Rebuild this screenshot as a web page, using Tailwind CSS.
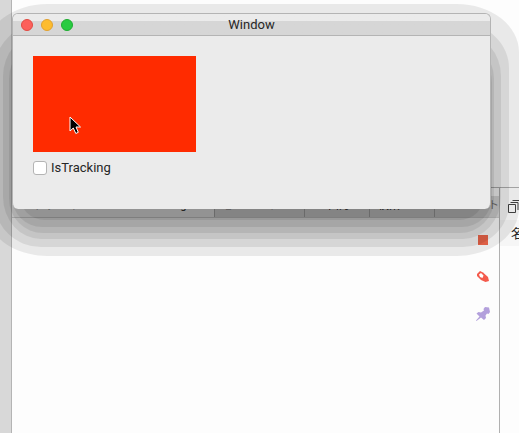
<!DOCTYPE html>
<html lang="en">
<head>
<meta charset="utf-8">
<title>Window</title>
<script src="https://cdn.jsdelivr.net/npm/@tailwindcss/browser@4"></script>
</head>
<body class="relative min-h-screen overflow-hidden bg-[#fdfdfd] font-[Roboto,'Noto_Sans_CJK_JP',sans-serif] text-[#262626]">

<!-- Editor behind the window -->
<div class="flex h-screen">
  <aside class="w-3 shrink-0 border-r border-[#b4b4b4] bg-[#d8d8d8]"></aside>
  <div class="flex min-w-0 flex-1 flex-col pt-[187px]">
    <div class="flex min-h-0 flex-1 border-t border-[#b0b0b0]">
      <main class="flex min-w-0 flex-1 flex-col">
        <nav class="mt-2 flex h-[22px] shrink-0 overflow-hidden border-b border-[#d0d0d0] bg-[#dcdcdc] text-[11px] leading-5 whitespace-nowrap">
          <a href="#" class="w-[203px] shrink-0 overflow-hidden border-r border-[#b0b0b0] bg-[#f4f4f4] pl-2">■ プライマリビュー — IsTracking</a>
          <a href="#" class="w-[90px] shrink-0 overflow-hidden border-r border-[#b0b0b0] pl-2">◯ ビューア</a>
          <a href="#" class="w-[65px] shrink-0 overflow-hidden border-r border-[#b0b0b0] pl-2">88 出力</a>
          <a href="#" class="w-[65px] shrink-0 overflow-hidden border-r border-[#b0b0b0] pl-2">検索</a>
          <a href="#" class="flex-1 overflow-hidden text-right text-[#777]">ト</a>
        </nav>
        <div class="flex flex-col items-end gap-[21px] pt-[14px] pr-2">
          <button aria-label="Stop" class="block size-4"><svg viewBox="0 0 16 16"><path d="M3 3h10v10H3z" fill="#f0684c"/></svg></button>
          <button aria-label="Clear" class="block size-4"><svg viewBox="0 0 16 16"><path d="M2 5 5 2 8 3.500 13 8 14 12 10.500 13 6 11 2 7Z" fill="#f45a4c"/><path d="M4 5.500 6 4 8.500 6.500 7.500 9 5 8Z" fill="#fff"/></svg></button>
          <button aria-label="Pin" class="block size-4"><svg viewBox="0 0 16 16"><path d="M10 1 14 1.500 15 6 13.500 8 12 7.500 10.500 9.500 11 12 9 14 6 11.500 1.500 15 1 14.500 4.500 10.500 1.500 7.500 3.500 6 6 6.500 9 4.500 8.500 3Z" fill="#b3a0dc"/></svg></button>
        </div>
      </main>
      <aside class="w-5 shrink-0 overflow-hidden border-l border-[#b0b0b0]">
        <div class="flex h-8 items-center pt-1 pl-2">
          <svg class="h-[13px] w-4 shrink-0" viewBox="0 0 16 13" fill="none" stroke="#444"><path d="M.5 4.500h7v8h-7zM2.500 2.500h7.500V10M4.500.5H12.500V7"/></svg>
        </div>
        <div class="h-[26px] bg-[#f6f6f6] pl-[11px] text-[13px] leading-7 whitespace-nowrap">名</div>
      </aside>
    </div>
  </div>
</div>

<!-- Stepped window shadow -->
<svg class="pointer-events-none absolute top-0 left-0 h-[270px] w-[540px]" viewBox="0 0 540 270" fill="#000" fill-opacity=".08">
  <rect x="-15" y="4" width="534" height="252" rx="62" ry="48"/>
  <rect x="-5" y="24" width="514" height="223" rx="46" ry="44"/>
  <rect x="3" y="34" width="498" height="205" rx="38" ry="42"/>
  <rect x="9" y="44" width="485" height="189" rx="34"/>
  <rect x="12" y="52" width="480" height="175" rx="30"/>
  <rect x="19" y="60" width="466" height="160" rx="26"/>
</svg>

<!-- Foreground window -->
<section class="absolute top-[13px] right-7 left-3 h-[196px] overflow-hidden rounded-[6px] border border-b-0 border-[#b4b4b4] bg-[#ebebeb]">
  <header class="relative flex h-[22px] items-center justify-center border-b border-[#b4b4b4] bg-linear-to-b from-[#ebebeb] from-35% to-[#d6d6d6] to-35%">
    <div class="absolute inset-y-0 left-2 flex items-center gap-2">
      <button aria-label="Close" class="size-3 rounded-full border border-[#e04a42] bg-[#fc605b]"></button>
      <button aria-label="Minimize" class="size-3 rounded-full border border-[#e0a030] bg-[#fdbc2e]"></button>
      <button aria-label="Zoom" class="size-3 rounded-full border border-[#1eac30] bg-[#28cb41]"></button>
    </div>
    <h1 class="pt-px text-[13px] leading-5">Window</h1>
  </header>
  <div class="px-5 pt-5">
    <div class="h-24 w-[163px] bg-[#ff2b00]"></div>
    <label class="mt-[7px] flex items-center gap-1 text-[13px] leading-4"><input type="checkbox" class="size-[14px] appearance-none rounded-[3px] border border-[#b4b4b4] bg-white"><span class="pt-px">IsTracking</span></label>
  </div>
</section>

<svg class="pointer-events-none absolute top-[116px] left-[69px] h-[19px] w-[13px]" viewBox="0 0 13 19"><path d="M1 1v14l3.300-3 2.500 5.500 2.500-1.200L7 11h4.500z" fill="#000" stroke="#fff"/></svg>
</body>
</html>
